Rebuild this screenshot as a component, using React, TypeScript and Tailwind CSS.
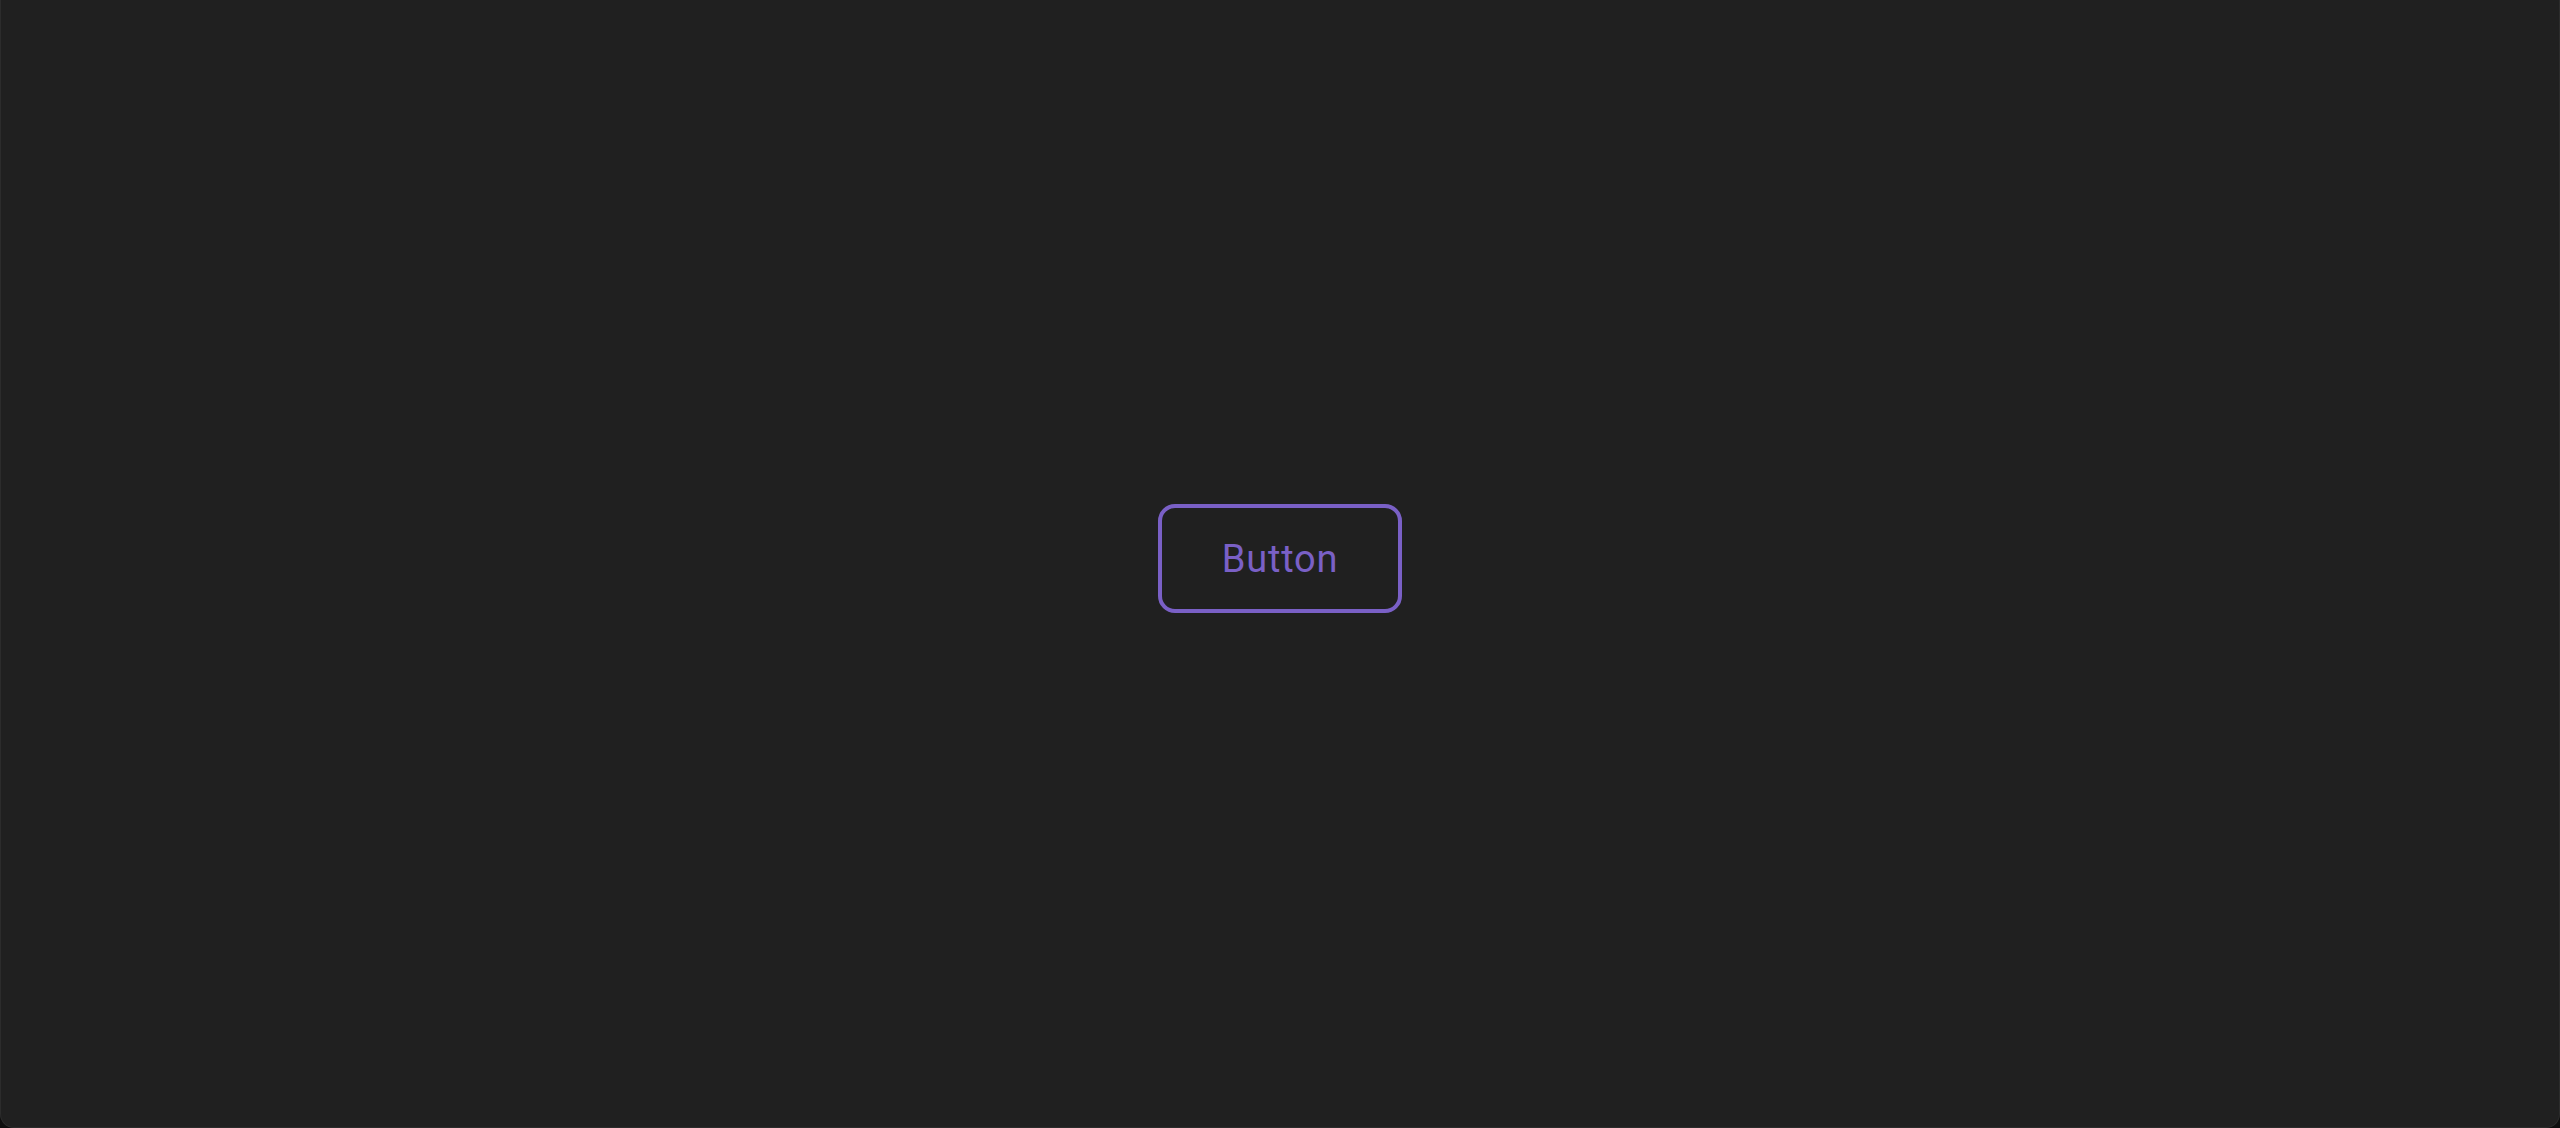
import React from "react";

export default function App() {
  return (
    <div className="h-[1128px] w-full bg-[#0f0f0f]">
      <div className="flex h-full w-full items-center justify-center rounded-b-[14px] border-x border-b border-[#2c2c2c] bg-[#202020] pb-[11px]">
        <button
          className="flex h-[109px] w-[244px] items-center justify-center rounded-[17px] border-4 border-[#7a60c6] bg-transparent pt-[2px] text-[38px] tracking-[0.02em] text-[#7a60c6]"
          style={{ fontFamily: "Roboto, sans-serif" }}
        >
          Button
        </button>
      </div>
    </div>
  );
}
